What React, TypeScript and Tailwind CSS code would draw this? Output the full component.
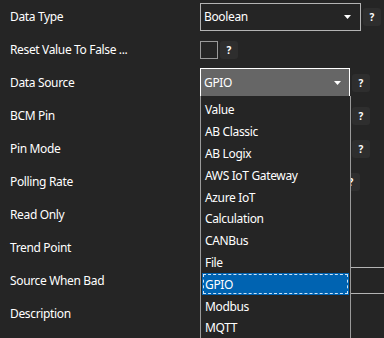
import React from "react";

const Q = ({ className = "" }: { className?: string }) => (
  <div className={"w-[18px] h-[18px] rounded-[3px] bg-[#2e2e2e] flex items-center justify-center text-[10px] font-bold text-white leading-none tracking-normal " + className}>
    ?
  </div>
);

const Arrow = () => (
  <svg width="7" height="4" viewBox="0 0 7 4" className="block">
    <polygon points="0,0 7,0 3.5,4" fill="#ffffff" />
  </svg>
);

const items = [
  "Value",
  "AB Classic",
  "AB Logix",
  "AWS IoT Gateway",
  "Azure IoT",
  "Calculation",
  "CANBus",
  "File",
  "GPIO",
  "Modbus",
  "MQTT",
];

export default function App() {
  const Row = ({ label, children }: { label: string; children?: React.ReactNode }) => (
    <div className="flex items-center h-[33px]">
      <div className="w-[200px] pl-[10px] shrink-0 pt-[1px]">{label}</div>
      <div className="flex items-center flex-1 min-w-0">{children}</div>
    </div>
  );
  return (
    <div
      className="relative w-[384px] h-[338px] overflow-hidden bg-[#252525] text-white text-[12px] tracking-[-0.35px]"
      style={{ fontFamily: '"Noto Sans", "Open Sans", sans-serif' }}
    >
      <Row label="Data Type">
        <div className="w-[161px] h-[28px] border border-[#b4b4b4] flex items-center justify-between pl-[3px] pr-[9px]">
          <span>Boolean</span>
          <Arrow />
        </div>
        <Q className="ml-[2px]" />
      </Row>
      <Row label="Reset Value To False ...">
        <div className="w-[18px] h-[18px] border border-[#9a9a9a]" />
        <Q className="ml-[2px]" />
      </Row>
      <Row label="Data Source">
        <div className="w-[150px] h-[29px] border border-white bg-[#666666] flex items-center justify-between pl-[3px] pr-[8px]">
          <span>GPIO</span>
          <Arrow />
        </div>
        <Q className="ml-[2px]" />
      </Row>
      <Row label="BCM Pin">
        <div className="w-[150px]" />
        <Q className="ml-[2px]" />
      </Row>
      <Row label="Pin Mode">
        <div className="w-[150px]" />
        <Q className="ml-[2px]" />
      </Row>
      <Row label="Polling Rate">
        <div className="w-[140px]" />
        <Q className="ml-[2px]" />
      </Row>
      <Row label="Read Only" />
      <Row label="Trend Point" />
      <Row label="Source When Bad">
        <div className="w-[200px] h-[27px] border border-[#b4b4b4] shrink-0" />
      </Row>
      <Row label="Description" />

      <div className="absolute left-[200px] top-[96px] w-[151px] h-[250px] bg-[#252525] border-x border-[#9a9a9a] pt-[3px] px-[1px]">
        {items.map((it) => (
          <div
            key={it}
            className={
              "h-[21.8px] flex items-center pl-[3px] pt-[1px] " +
              (it === "GPIO" ? "bg-[#0063b1] outline outline-1 outline-dashed outline-[#cfe3f5] -outline-offset-2" : "")
            }
          >
            {it}
          </div>
        ))}
      </div>
    </div>
  );
}
